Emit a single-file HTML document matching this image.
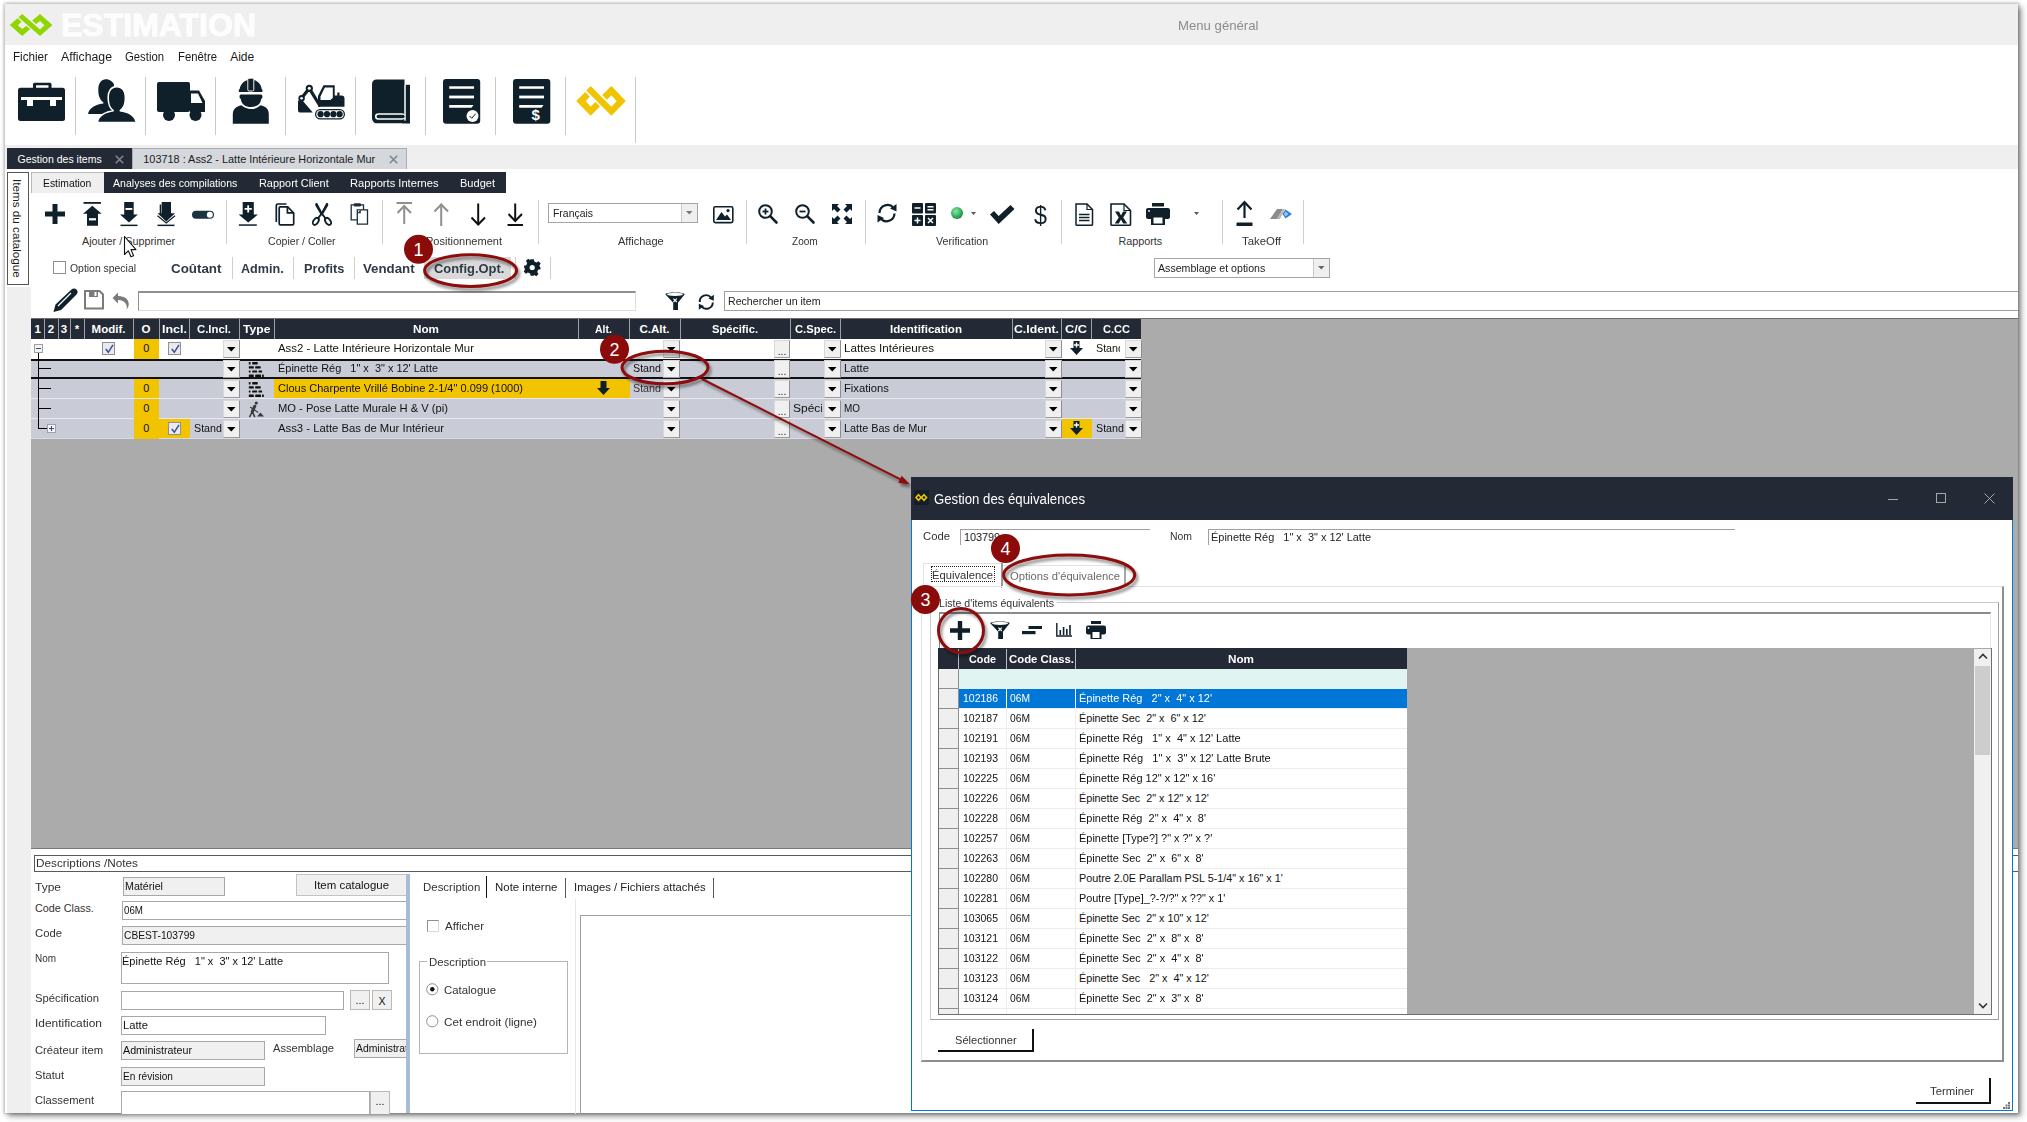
<!DOCTYPE html>
<html><head><meta charset="utf-8"><title>Estimation</title>
<style>
html,body{margin:0;padding:0;width:2027px;height:1122px;overflow:hidden;background:#fff;}
body{position:relative;font-family:"Liberation Sans", sans-serif;}
body div{position:absolute;box-sizing:border-box;}
body svg{position:absolute;overflow:visible;}
.t{white-space:pre;line-height:1;}

</style></head><body>
<div style="left:5px;top:4px;width:2013px;height:1109px;background:#fff;box-shadow:0 0 3px 1px rgba(0,0,0,0.25), 3px 3px 6px rgba(0,0,0,0.45);"></div>
<div style="left:5px;top:4px;width:2013px;height:41px;background:#efefef;"></div>
<svg style="left:0;top:0;" width="2027" height="1122" viewBox="0 0 2027 1122"><path d="M22.18,13.90 L40.02,29.40 L44.52,25.21 L40.02,20.88 L36.16,24.09 L32.14,20.60 L40.02,13.90 L52.40,25.07 L40.02,36.10 L18.48,17.25Z M17.52,18.37 L9.80,25.07 L22.18,36.10 L30.22,29.12 L26.36,25.91 L22.18,29.12 L17.84,25.21 L21.54,21.86Z" fill="#8fd600"/></svg>
<div class="t" style="left:60.60px;top:9.60px;font-size:30.5px;color:#fdfdfd;font-weight:bold;transform:scaleX(1.0494);transform-origin:0 0;-webkit-text-stroke:0.9px #fdfdfd;">ESTIMATION</div>
<div class="t" style="left:1178.25px;top:18.80px;font-size:13px;color:#8c8c8c;transform:scaleX(1.0126);transform-origin:0 0;">Menu général</div>
<div class="t" style="left:13.00px;top:51.00px;font-size:12px;color:#1b1b1b;transform:scaleX(0.9718);transform-origin:0 0;">Fichier</div>
<div class="t" style="left:61.20px;top:51.00px;font-size:12px;color:#1b1b1b;transform:scaleX(1.0235);transform-origin:0 0;">Affichage</div>
<div class="t" style="left:125.40px;top:51.00px;font-size:12px;color:#1b1b1b;transform:scaleX(0.9430);transform-origin:0 0;">Gestion</div>
<div class="t" style="left:178.00px;top:51.00px;font-size:12px;color:#1b1b1b;transform:scaleX(0.9430);transform-origin:0 0;">Fenêtre</div>
<div class="t" style="left:230.20px;top:51.00px;font-size:12px;color:#1b1b1b;">Aide</div>
<div style="left:75px;top:77px;width:1px;height:58px;background:#c9c9c9;"></div>
<div style="left:145px;top:77px;width:1px;height:58px;background:#c9c9c9;"></div>
<div style="left:215px;top:77px;width:1px;height:58px;background:#c9c9c9;"></div>
<div style="left:285px;top:77px;width:1px;height:58px;background:#c9c9c9;"></div>
<div style="left:355px;top:77px;width:1px;height:58px;background:#c9c9c9;"></div>
<div style="left:425px;top:77px;width:1px;height:58px;background:#c9c9c9;"></div>
<div style="left:495px;top:77px;width:1px;height:58px;background:#c9c9c9;"></div>
<div style="left:565px;top:77px;width:1px;height:58px;background:#c9c9c9;"></div>
<div style="left:635px;top:77px;width:1px;height:66px;background:#c9c9c9;"></div>
<svg style="left:18px;top:82px" width="48" height="40" viewBox="0 0 48 40"><g fill="#0f202b">
<rect x="0" y="5.8" width="47" height="33.2" rx="2.5"/>
<path d="M15,0.7 h17 a1.5,1.5 0 0 1 1.5,1.5 v4 h-3 v-3 h-12.5 v3 h-3 v-4 a1.5,1.5 0 0 1 1.5,-1.5z"/>
</g>
<path d="M3,16.5 h41" stroke="#fff" stroke-width="3.2"/>
<rect x="9" y="16" width="6" height="8" fill="#fff"/><rect x="32" y="16" width="6" height="8" fill="#fff"/></svg>
<svg style="left:88px;top:79px" width="48" height="44" viewBox="0 0 48 44"><path d="M15.6,23.7 C12,21 10.3,17 10.3,11 C10.3,4 13.5,0.3 17.9,0.3 C22,0.3 25,3 26,5.5 L26,35 H0 C1,29.5 7,25.5 15.3,24.6 Z" fill="#0f202b"/>
<path d="M25.9,31 C22,28.5 21,24 21,18.5 C21,12 24,8.4 28.8,8.4 C33.6,8.4 36.6,12 36.6,18.5 C36.6,24 35.5,28.5 31.5,31.2 L31.8,32.6 C40,33.5 46,37 47.3,42.7 H10.3 C11.5,37 18,33.5 25.6,32.6 Z" fill="#fff" stroke="#fff" stroke-width="3.2"/>
<path d="M25.9,31 C22,28.5 21,24 21,18.5 C21,12 24,8.4 28.8,8.4 C33.6,8.4 36.6,12 36.6,18.5 C36.6,24 35.5,28.5 31.5,31.2 L31.8,32.6 C40,33.5 46,37 47.3,42.7 H10.3 C11.5,37 18,33.5 25.6,32.6 Z" fill="#0f202b"/></svg>
<svg style="left:157px;top:82px" width="49" height="40" viewBox="0 0 49 40"><g fill="#0f202b">
<rect x="0" y="0" width="33" height="30" rx="2"/>
<path d="M33,8.5 H42 L48,19 V30 H33 Z"/>
<circle cx="12" cy="33" r="6"/><circle cx="38.5" cy="33" r="6"/>
</g>
<path d="M34,11.5 H41 L45.5,21 H34 Z" fill="#fff"/></svg>
<svg style="left:232px;top:77px" width="38" height="48" viewBox="0 0 38 48"><g fill="#0f202b">
<path d="M7.5,14.5 C7.5,8 11.5,4 16,3 V13.5 H21.5 V3 C26,4 30,8 30,14.5 Z"/>
<rect x="6.8" y="12.3" width="23.6" height="2.8" rx="0.6"/>
<path d="M9,17.5 H29 C30.3,17.5 30.8,19.5 30.2,21 L29.2,22 C28.5,27.5 24.5,30 19,30 C13.5,30 9.5,27.5 8.8,22 L7.8,21 C7.2,19.5 7.7,17.5 9,17.5Z"/>
<path d="M0.8,46.8 V37.5 C1,32 4,29.5 9.5,28.3 C12.5,31 15.5,32 19,32 C22.5,32 25.5,31 28.5,28.3 C34,29.5 36.8,32 36.8,37.5 V46.8 Z"/>
</g>
<rect x="15.8" y="1.2" width="6" height="12.8" rx="1.2" fill="#0f202b" stroke="#fff" stroke-width="0.9"/></svg>
<svg style="left:297px;top:84px" width="49" height="37" viewBox="0 0 49 37"><g fill="#0f202b">
<path d="M21,12 L26.5,1.3 H37.7 V11.5 H44.5 C46.5,11.5 47.5,12.5 47.5,14.5 V22.8 H21 Z"/>
<rect x="40.3" y="8.5" width="2.2" height="4"/>
<path d="M1,16.5 H5.5 L15.8,28.5 H3 C1.5,28.5 1,27.5 1,26 Z"/>
<rect x="18" y="25" width="30" height="10.5" rx="5.2"/>
</g>
<g fill="none" stroke="#0f202b" stroke-width="3.2" stroke-linecap="round" stroke-linejoin="round">
<path d="M22.5,21 L12.3,4.3 L4.5,14.3"/>
</g>
<circle cx="12.3" cy="4.3" r="3.6" fill="#0f202b"/><circle cx="4.6" cy="14.3" r="3.2" fill="#0f202b"/>
<circle cx="12.3" cy="4.3" r="1.5" fill="#fff"/><circle cx="4.6" cy="14.3" r="1.3" fill="#fff"/>
<path d="M23.5,12.6 L27.8,3.5 H35.8 V13.8 L33.5,16 H23.5 Z" fill="#fff"/>
<rect x="19.3" y="26.3" width="27.4" height="7.9" rx="3.9" fill="#fff"/>
<g fill="#0f202b"><circle cx="23.6" cy="30.2" r="3.1"/><circle cx="30" cy="30.2" r="3.1"/><circle cx="36.4" cy="30.2" r="3.1"/><circle cx="42.6" cy="30.2" r="3.1"/></g></svg>
<svg style="left:372px;top:79px" width="39" height="45" viewBox="0 0 39 45"><g fill="#0f202b">
<path d="M4.5,0.4 H32.5 V44.3 H5 C2,44.3 0,42 0,39 V5 C0,2 2,0.4 4.5,0.4 Z"/>
<rect x="33.5" y="5.8" width="4.5" height="38.5"/>
<rect x="30" y="41.5" width="8" height="2.8"/>
</g>
<rect x="32.5" y="5.8" width="1" height="35.7" fill="#fff"/>
<rect x="3" y="34.2" width="30" height="6.6" rx="3.3" fill="#fff"/>
<rect x="4.6" y="35.8" width="28" height="3.4" rx="1.7" fill="#0f202b"/></svg>
<svg style="left:443px;top:79px" width="38" height="45" viewBox="0 0 38 45"><rect x="0" y="0" width="37.2" height="44.8" rx="3" fill="#0f202b"/>
<g fill="#fff"><rect x="6.2" y="7.3" width="24.8" height="2.5"/><rect x="6.2" y="16.6" width="24.8" height="2.8"/><path d="M6.2,26 H30.5 L28.5,28.7 H6.2Z"/>
<circle cx="29.5" cy="37" r="6"/></g>
<path d="M26.5,37 L28.8,39.3 L32.7,34.6" fill="none" stroke="#0f202b" stroke-width="1"/></svg>
<svg style="left:513px;top:79px" width="38" height="45" viewBox="0 0 38 45"><rect x="0" y="0" width="37.3" height="44.8" rx="3" fill="#0f202b"/>
<g fill="#fff"><rect x="6.2" y="7.3" width="24.8" height="2.5"/><rect x="6.2" y="16.6" width="24.8" height="2.8"/><path d="M6.2,26 H30.5 L28.5,28.7 H6.2Z"/></g></svg>
<div class="t" style="left:531.50px;top:106.50px;font-size:15px;color:#fff;font-weight:bold;">$</div>
<svg style="left:0;top:0;" width="2027" height="1122" viewBox="0 0 2027 1122"><path d="M590.61,86.00 L611.39,106.80 L616.63,101.18 L611.39,95.37 L606.90,99.68 L602.22,95.00 L611.39,86.00 L625.80,100.99 L611.39,115.80 L586.31,90.50Z M585.18,92.00 L576.20,100.99 L590.61,115.80 L599.97,106.43 L595.48,102.12 L590.61,106.43 L585.56,101.18 L589.86,96.68Z" fill="#f0c400"/></svg>
<div style="left:5px;top:145px;width:2013px;height:24px;background:#efefef;"></div>
<div style="left:7px;top:148px;width:125px;height:21px;background:#232a35;"></div>
<div class="t" style="left:17.60px;top:153.80px;font-size:10.5px;color:#fff;">Gestion des items</div>
<svg style="left:115px;top:155px" width="9" height="9" viewBox="0 0 9 9"><path d="M0.8,0.8 L8.2,8.2 M8.2,0.8 L0.8,8.2" stroke="#80868e" stroke-width="1.6"/></svg>
<div style="left:132px;top:148px;width:275px;height:21px;background:#d4d7db;border:1px solid #a9adb3;border-bottom:none;"></div>
<div class="t" style="left:143.30px;top:153.80px;font-size:10.9px;color:#1b1b1b;">103718 : Ass2 - Latte Intérieure Horizontale Mur</div>
<svg style="left:389px;top:155px" width="9" height="9" viewBox="0 0 9 9"><path d="M0.8,0.8 L8.2,8.2 M8.2,0.8 L0.8,8.2" stroke="#80868e" stroke-width="1.6"/></svg>
<div style="left:7px;top:172px;width:22px;height:113px;background:#fff;border:1px solid #555;"></div>
<div class="t" style="left:23px;top:179px;font-size:11.7px;color:#1b1b1b;transform:rotate(90deg);transform-origin:0 0;line-height:1;">Items du catalogue</div>
<div style="left:7px;top:287px;width:24px;height:826px;background:#efefef;"></div>
<div style="left:31px;top:172px;width:73px;height:21px;background:#efefef;border-top:1px solid #b9b9b9;border-left:1px solid #b9b9b9;"></div>
<div class="t" style="left:42.80px;top:178.00px;font-size:10.5px;color:#111;transform:scaleX(0.9871);transform-origin:0 0;">Estimation</div>
<div style="left:104px;top:172px;width:402px;height:21px;background:#232a35;"></div>
<div class="t" style="left:113.30px;top:178.00px;font-size:10.8px;color:#fff;transform:scaleX(0.9777);transform-origin:0 0;">Analyses des compilations</div>
<div class="t" style="left:259.20px;top:178.00px;font-size:10.8px;color:#fff;transform:scaleX(1.0099);transform-origin:0 0;">Rapport Client</div>
<div class="t" style="left:350.00px;top:178.00px;font-size:10.8px;color:#fff;transform:scaleX(1.0323);transform-origin:0 0;">Rapports Internes</div>
<div class="t" style="left:460.00px;top:178.00px;font-size:10.8px;color:#fff;transform:scaleX(1.0224);transform-origin:0 0;">Budget</div>
<div style="left:226px;top:200px;width:1px;height:44px;background:#cfcfcf;"></div>
<div style="left:382px;top:200px;width:1px;height:44px;background:#cfcfcf;"></div>
<div style="left:538px;top:200px;width:1px;height:44px;background:#cfcfcf;"></div>
<div style="left:746px;top:200px;width:1px;height:44px;background:#cfcfcf;"></div>
<div style="left:865px;top:200px;width:1px;height:44px;background:#cfcfcf;"></div>
<div style="left:1061px;top:200px;width:1px;height:44px;background:#cfcfcf;"></div>
<div style="left:1222px;top:200px;width:1px;height:44px;background:#cfcfcf;"></div>
<div style="left:1303px;top:200px;width:1px;height:44px;background:#cfcfcf;"></div>
<div class="t" style="left:82.00px;top:236.00px;font-size:10.8px;color:#333;">Ajouter / Supprimer</div>
<div class="t" style="left:268.40px;top:236.00px;font-size:10.8px;color:#333;transform:scaleX(0.9795);transform-origin:0 0;">Copier / Coller</div>
<div class="t" style="left:425.50px;top:236.00px;font-size:10.8px;color:#333;transform:scaleX(1.0210);transform-origin:0 0;">Positionnement</div>
<div class="t" style="left:617.70px;top:236.00px;font-size:10.8px;color:#333;transform:scaleX(1.0194);transform-origin:0 0;">Affichage</div>
<div class="t" style="left:791.70px;top:236.00px;font-size:10.8px;color:#333;transform:scaleX(0.9308);transform-origin:0 0;">Zoom</div>
<div class="t" style="left:935.80px;top:236.00px;font-size:10.8px;color:#333;transform:scaleX(0.9881);transform-origin:0 0;">Verification</div>
<div class="t" style="left:1118.40px;top:236.00px;font-size:10.8px;color:#333;">Rapports</div>
<div class="t" style="left:1241.70px;top:236.00px;font-size:10.8px;color:#333;transform:scaleX(1.0536);transform-origin:0 0;">TakeOff</div>
<svg style="left:45px;top:204px" width="20" height="20" viewBox="0 0 20 20"><path d="M7.5,0 h5 v7.5 h7.5 v5 h-7.5 v7.5 h-5 v-7.5 h-7.5 v-5 h7.5z" fill="#0f202b"/></svg>
<svg style="left:83px;top:201px" width="19" height="26" viewBox="0 0 19 26"><rect x="0.5" y="1" width="17.5" height="1.8" fill="#0f202b"/>
<path d="M9.3,4.8 L18.7,12.8 H15 V24.8 H4 V12.8 H0 Z" fill="#0f202b"/>
<rect x="6" y="17.2" width="7" height="2.2" fill="#fff"/></svg>
<svg style="left:120px;top:202px" width="19" height="25" viewBox="0 0 19 25"><path d="M4.2,0 H13.7 V12.6 H17.8 L9,20.5 L0,12.6 H4.2 Z" fill="#0f202b"/>
<rect x="5.5" y="6" width="6.8" height="1.9" fill="#fff"/>
<rect x="0.5" y="22.6" width="17" height="1.5" fill="#0f202b"/></svg>
<svg style="left:157px;top:202px" width="19" height="25" viewBox="0 0 19 25"><rect x="2.7" y="2.5" width="1.6" height="10" fill="#0f202b"/>
<path d="M4.7,0 H14 V11.3 H18 L9.3,19.5 L0.5,11.3 H4.7 Z" fill="#0f202b"/>
<path d="M0.5,13.8 L9.3,21 L18,13.8" fill="none" stroke="#0f202b" stroke-width="1.2"/>
<rect x="0.5" y="22.6" width="17" height="1.5" fill="#0f202b"/></svg>
<svg style="left:192px;top:210px" width="23" height="10" viewBox="0 0 23 10"><rect x="0" y="0.8" width="22" height="8" rx="4" fill="#1c3341"/>
<circle cx="17.8" cy="4.8" r="3" fill="#fff"/></svg>
<svg style="left:238px;top:202px" width="20" height="25" viewBox="0 0 20 25"><path d="M4.7,0 H15.8 V12.6 H19.9 L10.2,20.6 L0.6,12.6 H4.7 Z" fill="#0f202b"/>
<path d="M9.3,3.2 h1.8 v2.7 h2.7 v1.8 h-2.7 v2.7 h-1.8 v-2.7 h-2.7 v-1.8 h2.7z" fill="#fff"/>
<rect x="0.9" y="22.3" width="17.9" height="1.5" fill="#0f202b"/></svg>
<svg style="left:274px;top:202px" width="22" height="25" viewBox="0 0 22 25"><g fill="none" stroke="#0f202b" stroke-width="1.7" stroke-linejoin="round">
<path d="M2.3,20 V3.5 C2.3,2.5 2.8,2 3.8,2 H12.5"/>
<path d="M5.2,6 C5.2,5.2 5.6,4.8 6.3,4.8 H13.7 L19.7,11 V21.8 C19.7,22.5 19.3,22.9 18.6,22.9 H6.3 C5.6,22.9 5.2,22.5 5.2,21.8 Z"/>
<path d="M13.4,4.8 V10.9 H19.6"/></g></svg>
<svg style="left:312px;top:202px" width="20" height="25" viewBox="0 0 20 25"><g fill="#0f202b">
<path d="M4,1 C5,0.8 5.8,1.5 6,2.5 L10.8,11.5 L9.2,13.5 L3.3,3.5 C3,2.5 3.3,1.3 4,1 Z"/>
<path d="M15.5,1 C14.5,0.8 13.7,1.5 13.5,2.5 L8.7,11.5 L10.3,13.5 L16.2,3.5 C16.5,2.5 16.2,1.3 15.5,1 Z"/>
<path d="M9.7,11.5 L5.5,17 M9.7,11.5 L14,17" stroke="#0f202b" stroke-width="2"/>
</g>
<g fill="none" stroke="#0f202b" stroke-width="1.9">
<ellipse cx="3.8" cy="19.3" rx="2.4" ry="3.9" transform="rotate(35 3.8 19.3)"/>
<ellipse cx="16" cy="19.3" rx="2.4" ry="3.9" transform="rotate(-35 16 19.3)"/>
</g></svg>
<svg style="left:350px;top:202px" width="19" height="24" viewBox="0 0 19 24"><g fill="none" stroke="#1b2d3a" stroke-width="1.3">
<path d="M10.5,2.8 H13.5 V8"/><path d="M4,2.8 H1.2 V17.8 H6.8"/>
<path d="M7.3,7.8 H17.5 V22.2 H7.3 V11.3 Z"/>
</g>
<rect x="3.7" y="1.2" width="7.3" height="3.2" rx="1.2" fill="#1b2d3a"/>
<path d="M7.3,11.3 L10.8,7.8 V11.3 Z" fill="#1b2d3a"/></svg>
<svg style="left:396px;top:202px" width="17" height="24" viewBox="0 0 17 24"><g fill="none" stroke="#8f8f8f" stroke-width="2">
<path d="M0.5,1 H16"/><path d="M8.2,4 V22"/><path d="M1.5,11 L8.2,4 L15,11"/></g></svg>
<svg style="left:433px;top:203px" width="17" height="24" viewBox="0 0 17 24"><g fill="none" stroke="#8f8f8f" stroke-width="2">
<path d="M8.2,1.5 V23"/><path d="M1.5,8.5 L8.2,1.5 L15,8.5"/></g></svg>
<svg style="left:470px;top:203px" width="17" height="24" viewBox="0 0 17 24"><g fill="none" stroke="#111" stroke-width="2">
<path d="M8.2,0.5 V21.5"/><path d="M1.5,14.5 L8.2,21.5 L15,14.5"/></g></svg>
<svg style="left:507px;top:203px" width="17" height="24" viewBox="0 0 17 24"><g fill="none" stroke="#111" stroke-width="2">
<path d="M8.2,0.5 V18"/><path d="M1.5,11 L8.2,18 L15,11"/><path d="M0.5,22 H16"/></g></svg>
<div style="left:548px;top:203px;width:150px;height:20px;background:#fff;border:1px solid #a5a5a5;"></div>
<div style="left:681px;top:204px;width:16px;height:18px;background:#efefef;border-left:1px solid #c8c8c8;"></div>
<svg style="left:686px;top:211px" width="7" height="4" viewBox="0 0 7 4"><path d="M0,0 H6.5 L3.25,3.5Z" fill="#777"/></svg>
<div class="t" style="left:552.50px;top:208.00px;font-size:10.8px;color:#222;transform:scaleX(0.9660);transform-origin:0 0;">Français</div>
<svg style="left:713px;top:206px" width="21" height="18" viewBox="0 0 21 18"><rect x="0.8" y="0.8" width="19" height="15.8" rx="1.5" fill="none" stroke="#0f202b" stroke-width="1.6"/>
<path d="M3,14 L8.5,6 L12,10.5 L14,8.5 L18,14 Z" fill="#0f202b"/><circle cx="15" cy="4.6" r="1.6" fill="#0f202b"/></svg>
<svg style="left:758px;top:204px" width="21" height="21" viewBox="0 0 21 21"><circle cx="7.5" cy="7.5" r="6.3" fill="none" stroke="#0f202b" stroke-width="2"/>
<path d="M4.5,7.5 H10.5" stroke="#0f202b" stroke-width="1.8"/><path d="M7.5,4.5 V10.5" stroke="#0f202b" stroke-width="1.8"/>
<path d="M12.2,12.2 L18.5,18.5" stroke="#0f202b" stroke-width="2.6" stroke-linecap="round"/></svg>
<svg style="left:795px;top:204px" width="21" height="21" viewBox="0 0 21 21"><circle cx="7.5" cy="7.5" r="6.3" fill="none" stroke="#0f202b" stroke-width="2"/>
<path d="M4.5,7.5 H10.5" stroke="#0f202b" stroke-width="1.8"/>
<path d="M12.2,12.2 L18.5,18.5" stroke="#0f202b" stroke-width="2.6" stroke-linecap="round"/></svg>
<svg style="left:832px;top:204px" width="21" height="21" viewBox="0 0 21 21"><g fill="#0f202b">
<path d="M0,0 H7 L5,2 L8.5,5.5 L5.5,8.5 L2,5 L0,7Z"/>
<path d="M20,0 H13 L15,2 L11.5,5.5 L14.5,8.5 L18,5 L20,7Z"/>
<path d="M0,20 H7 L5,18 L8.5,14.5 L5.5,11.5 L2,15 L0,13Z"/>
<path d="M20,20 H13 L15,18 L11.5,14.5 L14.5,11.5 L18,15 L20,13Z"/>
</g></svg>
<svg style="left:877px;top:203px" width="21" height="21" viewBox="0 0 21 21"><g fill="none" stroke="#0f202b" stroke-width="2.2">
<path d="M2.5,10 A8,8 0 0 1 16.5,4.8"/><path d="M17.5,10.5 A8,8 0 0 1 3.5,15.5"/></g>
<path d="M13,5.5 L19.5,1 V8.5Z" fill="#0f202b"/><path d="M7,15 L0.5,19.5 V12Z" fill="#0f202b"/></svg>
<svg style="left:912px;top:203px" width="24" height="23" viewBox="0 0 24 23"><g fill="#0f202b"><rect x="0" y="0" width="11" height="10.5" rx="1"/><rect x="13" y="0" width="11" height="10.5" rx="1"/>
<rect x="0" y="12" width="11" height="11" rx="1"/><rect x="13" y="12" width="11" height="11" rx="1"/></g>
<g stroke="#fff" stroke-width="1.5"><path d="M2.5,5 H8.5"/><path d="M15.5,3.8 H21.5 M15.5,6.8 H21.5"/>
<path d="M2.5,17.5 H8.5 M5.5,14.5 V20.5"/><path d="M16,15 L21,20 M21,15 L16,20"/></g></svg>
<svg style="left:951px;top:207px" width="13" height="13" viewBox="0 0 13 13"><defs><radialGradient id="gb" cx="0.4" cy="0.35" r="0.7"><stop offset="0" stop-color="#8ee6a4"/><stop offset="0.6" stop-color="#35b462"/><stop offset="1" stop-color="#1d7d3e"/></radialGradient></defs>
<circle cx="6" cy="6" r="6" fill="url(#gb)"/></svg>
<svg style="left:971px;top:212px" width="6" height="4" viewBox="0 0 6 4"><path d="M0,0 H5 L2.5,3Z" fill="#555"/></svg>
<svg style="left:990px;top:205px" width="25" height="20" viewBox="0 0 25 20"><path d="M0,9.5 L4,6 L8.7,11 L20.5,0 L24.5,4 L8.7,19 Z" fill="#0f202b"/></svg>
<div class="t" style="left:1034.00px;top:201.50px;font-size:26px;color:#0f202b;transform:scaleX(0.8985);transform-origin:0 0;">$</div>
<svg style="left:1075px;top:203px" width="19" height="23" viewBox="0 0 19 23"><path d="M1,1 H12 L17.5,6.5 V21.5 C17.5,22 17,22.3 16.5,22.3 H2 C1.5,22.3 1,22 1,21.5 Z" fill="none" stroke="#0f202b" stroke-width="1.5"/>
<path d="M12,1 V6.5 H17.5" fill="none" stroke="#0f202b" stroke-width="1.2"/>
<g stroke="#0f202b" stroke-width="1.3"><path d="M4,11.5 H14.5 M4,14.5 H14.5 M4,17.5 H14.5"/></g></svg>
<svg style="left:1110px;top:203px" width="22" height="23" viewBox="0 0 22 23"><path d="M1,1 H14 L20.5,7.5 V21.5 C20.5,22 20,22.3 19.5,22.3 H2 C1.5,22.3 1,22 1,21.5 Z" fill="none" stroke="#0f202b" stroke-width="1.6"/>
<path d="M14,1 V7.5 H20.5" fill="none" stroke="#0f202b" stroke-width="1.2"/>
<path d="M5,8.5 H9 L11,12.5 L13,8.5 H17 L13.2,14.5 L17.3,20.5 H13.2 L11,16.5 L8.8,20.5 H4.7 L8.8,14.5 Z" fill="#0f202b"/></svg>
<svg style="left:1146px;top:203px" width="25" height="22" viewBox="0 0 25 22"><g fill="#0f202b"><rect x="6" y="0" width="12" height="3.5"/><rect x="0" y="5" width="24" height="11" rx="2"/>
<rect x="5" y="12" width="14" height="10"/></g>
<rect x="7.5" y="14.5" width="9" height="6" fill="#fff"/><circle cx="3" cy="8" r="0.9" fill="#fff"/></svg>
<svg style="left:1194px;top:212px" width="6" height="4" viewBox="0 0 6 4"><path d="M0,0 H5 L2.5,3Z" fill="#555"/></svg>
<svg style="left:1236px;top:201px" width="18" height="26" viewBox="0 0 18 26"><path d="M8.5,1 V17" stroke="#0f202b" stroke-width="2.2"/><path d="M1.5,8.5 L8.5,1.2 L15.5,8.5" fill="none" stroke="#0f202b" stroke-width="2.2"/>
<rect x="0.5" y="21.5" width="16" height="3.5" rx="0.5" fill="#0f202b"/></svg>
<svg style="left:1270px;top:208px" width="23" height="12" viewBox="0 0 23 12"><path d="M0,11 L7,1 H13 L7,11 Z" fill="#8c8c8c"/><path d="M7,11 L13,1 H15 L10,11Z" fill="#b8b8b8"/>
<path d="M15.5,1.5 L22,6 L15.5,10.5 L12.5,6Z" fill="#2f7fd6"/><path d="M15.5,3.5 L18.5,6 L15.5,8.5 L14,6Z" fill="#9bc6f2"/></svg>
<div style="left:53px;top:261px;width:13px;height:13px;background:#fff;border:1px solid #8f8f8f;"></div>
<div class="t" style="left:70.00px;top:262.50px;font-size:10.5px;color:#333;transform:scaleX(0.9918);transform-origin:0 0;">Option special</div>
<div style="left:425px;top:257px;width:86px;height:22px;background:#d9d9d9;"></div>
<div style="left:232px;top:257px;width:1px;height:22px;background:#cfcfcf;"></div>
<div style="left:293px;top:257px;width:1px;height:22px;background:#cfcfcf;"></div>
<div style="left:354px;top:257px;width:1px;height:22px;background:#cfcfcf;"></div>
<div style="left:424px;top:257px;width:1px;height:22px;background:#cfcfcf;"></div>
<div style="left:515px;top:257px;width:1px;height:22px;background:#cfcfcf;"></div>
<div style="left:550px;top:257px;width:1px;height:22px;background:#cfcfcf;"></div>
<div class="t" style="left:171.40px;top:263.00px;font-size:12px;color:#2e3a46;font-weight:bold;transform:scaleX(1.1119);transform-origin:0 0;">Coûtant</div>
<div class="t" style="left:240.80px;top:263.00px;font-size:12px;color:#2e3a46;font-weight:bold;transform:scaleX(1.0499);transform-origin:0 0;">Admin.</div>
<div class="t" style="left:303.50px;top:263.00px;font-size:12px;color:#2e3a46;font-weight:bold;transform:scaleX(1.0601);transform-origin:0 0;">Profits</div>
<div class="t" style="left:363.00px;top:263.00px;font-size:12px;color:#2e3a46;font-weight:bold;transform:scaleX(1.1052);transform-origin:0 0;">Vendant</div>
<div class="t" style="left:434.30px;top:263.00px;font-size:12px;color:#2e3a46;font-weight:bold;transform:scaleX(1.0761);transform-origin:0 0;">Config.Opt.</div>
<svg style="left:524px;top:259px" width="17" height="17" viewBox="0 0 17 17"><g transform="translate(8.2,8.5)" fill="#0f202b">
<path d="M-1.6,-8.2 H1.6 L2.1,-5.9 L4.3,-5 L6.3,-6.3 L8.5,-4.1 L7.2,-2.1 L8,0 L8.3,-0.2 V1.8 L5.9,2.3 L5,4.5 L6.3,6.5 L4.1,8.7 L2.1,7.4 L1.6,7.7 V8.3 H-1.6 L-2.1,5.9 L-4.3,5 L-6.3,6.3 L-8.5,4.1 L-7.2,2.1 L-8,0 L-8.3,-1.8 L-5.9,-2.3 L-5,-4.5 L-6.3,-6.5 L-4.1,-8.7 L-2.1,-7.4 Z"/>
</g><circle cx="8.2" cy="8.5" r="4.6" fill="#0f202b"/><circle cx="8.2" cy="8.5" r="2.6" fill="#fff"/></svg>
<div style="left:1154px;top:258px;width:176px;height:20px;background:#fff;border:1px solid #a5a5a5;"></div>
<div style="left:1313px;top:259px;width:16px;height:18px;background:#efefef;border-left:1px solid #c8c8c8;"></div>
<svg style="left:1318px;top:266px" width="7" height="4" viewBox="0 0 7 4"><path d="M0,0 H6.5 L3.25,3.5Z" fill="#666"/></svg>
<div class="t" style="left:1157.70px;top:262.50px;font-size:10.8px;color:#222;transform:scaleX(0.9823);transform-origin:0 0;">Assemblage et options</div>
<svg style="left:53px;top:288px" width="25" height="25" viewBox="0 0 25 25"><path d="M18.5,1.5 C20,0 22,0 23.5,1.5 C25,3 25,5 23.5,6.5 L8,22 L0.5,24 L2.5,16.5 Z" fill="#0f202b"/>
<path d="M5,18 L18,5" stroke="#fff" stroke-width="1.3"/></svg>
<svg style="left:84px;top:290px" width="20" height="20" viewBox="0 0 20 20"><path d="M1,1 H15.5 L19,4.5 V18.5 H1 Z" fill="none" stroke="#7b7b7b" stroke-width="2"/>
<rect x="5" y="1" width="9" height="6" fill="#7b7b7b"/><rect x="10.5" y="2" width="2" height="4" fill="#fff"/></svg>
<svg style="left:112px;top:292px" width="17" height="18" viewBox="0 0 17 18"><path d="M6,0.5 L0.5,6 L6,11.5 V8 C10,8 13,9.5 14.5,13 C15,14.5 15,16 14.5,17.5 C17,15 17.5,11 15.5,8 C13.5,5 10,4 6,4 Z" fill="#7b7b7b"/></svg>
<div style="left:138px;top:291px;width:498px;height:20px;background:#fff;border-top:2px solid #8f8f8f;border-left:1px solid #8f8f8f;border-right:1px solid #dedede;border-bottom:1px solid #dedede;"></div>
<svg style="left:665px;top:291px" width="20" height="20" viewBox="0 0 20 20"><path d="M0.3,3.3 C0.3,1 19.7,1 19.7,3.3 L13,11.8 V19 H8.2 V11.8 Z" fill="#0f202b"/>
<ellipse cx="10" cy="3.3" rx="8.3" ry="1.6" fill="#fff"/>
<path d="M8.4,7.6 L11.8,11 M11.8,7.6 L8.4,11" stroke="#fff" stroke-width="1.1"/></svg>
<svg style="left:698px;top:294px" width="17" height="17" viewBox="0 0 17 17"><g fill="none" stroke="#0f202b" stroke-width="1.9">
<path d="M1.8,8 A6.3,6.3 0 0 1 13,3.6"/><path d="M14.8,8.5 A6.3,6.3 0 0 1 3.8,12.6"/></g>
<path d="M10.5,4.5 L15.8,0.8 V6.8Z" fill="#0f202b"/><path d="M6,12 L0.8,15.8 V9.8Z" fill="#0f202b"/></svg>
<div style="left:724px;top:291px;width:1294px;height:20px;background:#fff;border:1px solid #a0a0a0;border-right:none;"></div>
<div class="t" style="left:727.60px;top:295.50px;font-size:10.8px;color:#222;transform:scaleX(0.9818);transform-origin:0 0;">Rechercher un item</div>
<div style="left:31px;top:318px;width:1987px;height:531px;background:#ababab;border-top:1px solid #6e6e6e;border-bottom:1px solid #7a7a7a;"></div>
<div style="left:31px;top:319px;width:1110px;height:20px;background:#232a35;"></div>
<div class="t" style="left:34.60px;top:323.50px;font-size:11.5px;color:#fff;font-weight:bold;">1</div>
<div style="left:44px;top:319px;width:1px;height:20px;background:#9aa0a8;"></div>
<div class="t" style="left:47.75px;top:323.50px;font-size:11.5px;color:#fff;font-weight:bold;">2</div>
<div style="left:58px;top:319px;width:1px;height:20px;background:#9aa0a8;"></div>
<div class="t" style="left:60.70px;top:323.50px;font-size:11.5px;color:#fff;font-weight:bold;">3</div>
<div style="left:70px;top:319px;width:1px;height:20px;background:#9aa0a8;"></div>
<div class="t" style="left:74.81px;top:323.50px;font-size:11.5px;color:#fff;font-weight:bold;">*</div>
<div style="left:84px;top:319px;width:1px;height:20px;background:#9aa0a8;"></div>
<div class="t" style="left:91.60px;top:323.50px;font-size:11.5px;color:#fff;font-weight:bold;">Modif.</div>
<div style="left:133px;top:319px;width:1px;height:20px;background:#9aa0a8;"></div>
<div class="t" style="left:141.52px;top:323.50px;font-size:11.5px;color:#fff;font-weight:bold;">O</div>
<div style="left:159px;top:319px;width:1px;height:20px;background:#9aa0a8;"></div>
<div class="t" style="left:161.50px;top:323.50px;font-size:11.5px;color:#fff;font-weight:bold;transform:scaleX(1.0862);transform-origin:0 0;">Incl.</div>
<div style="left:189px;top:319px;width:1px;height:20px;background:#9aa0a8;"></div>
<div class="t" style="left:197.40px;top:323.50px;font-size:11.5px;color:#fff;font-weight:bold;transform:scaleX(0.9851);transform-origin:0 0;">C.Incl.</div>
<div style="left:239px;top:319px;width:1px;height:20px;background:#9aa0a8;"></div>
<div class="t" style="left:243.10px;top:323.50px;font-size:11.5px;color:#fff;font-weight:bold;transform:scaleX(1.0577);transform-origin:0 0;">Type</div>
<div style="left:274px;top:319px;width:1px;height:20px;background:#9aa0a8;"></div>
<div class="t" style="left:412.90px;top:323.50px;font-size:11.5px;color:#fff;font-weight:bold;transform:scaleX(1.0171);transform-origin:0 0;">Nom</div>
<div style="left:578px;top:319px;width:1px;height:20px;background:#9aa0a8;"></div>
<div class="t" style="left:594.90px;top:323.50px;font-size:11.5px;color:#fff;font-weight:bold;transform:scaleX(0.9174);transform-origin:0 0;">Alt.</div>
<div style="left:629px;top:319px;width:1px;height:20px;background:#9aa0a8;"></div>
<div class="t" style="left:639.45px;top:323.50px;font-size:11.5px;color:#fff;font-weight:bold;">C.Alt.</div>
<div style="left:680px;top:319px;width:1px;height:20px;background:#9aa0a8;"></div>
<div class="t" style="left:711.85px;top:323.50px;font-size:11.5px;color:#fff;font-weight:bold;transform:scaleX(0.9723);transform-origin:0 0;">Spécific.</div>
<div style="left:790px;top:319px;width:1px;height:20px;background:#9aa0a8;"></div>
<div class="t" style="left:794.75px;top:323.50px;font-size:11.5px;color:#fff;font-weight:bold;transform:scaleX(0.9719);transform-origin:0 0;">C.Spec.</div>
<div style="left:840px;top:319px;width:1px;height:20px;background:#9aa0a8;"></div>
<div class="t" style="left:889.95px;top:323.50px;font-size:11.5px;color:#fff;font-weight:bold;transform:scaleX(1.0061);transform-origin:0 0;">Identification</div>
<div style="left:1012px;top:319px;width:1px;height:20px;background:#9aa0a8;"></div>
<div class="t" style="left:1013.75px;top:323.50px;font-size:11.5px;color:#fff;font-weight:bold;transform:scaleX(1.0671);transform-origin:0 0;">C.Ident.</div>
<div style="left:1061px;top:319px;width:1px;height:20px;background:#9aa0a8;"></div>
<div class="t" style="left:1065.00px;top:323.50px;font-size:11.5px;color:#fff;font-weight:bold;transform:scaleX(1.1104);transform-origin:0 0;">C/C</div>
<div style="left:1091px;top:319px;width:1px;height:20px;background:#9aa0a8;"></div>
<div class="t" style="left:1102.65px;top:323.50px;font-size:11.5px;color:#fff;font-weight:bold;transform:scaleX(0.9600);transform-origin:0 0;">C.CC</div>
<div style="left:31px;top:339px;width:1110px;height:20px;background:#fff;"></div>
<div style="left:31px;top:359px;width:1110px;height:20px;background:#c9cbd6;"></div>
<div style="left:31px;top:379px;width:1110px;height:20px;background:#c9cbd6;"></div>
<div style="left:31px;top:399px;width:1110px;height:20px;background:#c9cbd6;"></div>
<div style="left:31px;top:419px;width:1110px;height:20px;background:#c9cbd6;"></div>
<div style="left:31px;top:398px;width:1110px;height:1px;background:#e8e8ee;"></div>
<div style="left:31px;top:418px;width:1110px;height:1px;background:#e8e8ee;"></div>
<div style="left:31px;top:438px;width:1110px;height:1px;background:#dadbe2;"></div>
<div style="left:31px;top:359px;width:1110px;height:2px;background:#111;"></div>
<div style="left:31px;top:377px;width:1110px;height:2px;background:#111;"></div>
<div style="left:134px;top:339px;width:25px;height:20px;background:#f2c400;"></div>
<div style="left:134px;top:379px;width:25px;height:19px;background:#f2c400;"></div>
<div style="left:134px;top:399px;width:25px;height:20px;background:#f2c400;"></div>
<div style="left:134px;top:419px;width:25px;height:20px;background:#f2c400;"></div>
<div style="left:159px;top:419px;width:31px;height:19px;background:#f2c400;"></div>
<div style="left:274.3px;top:379px;width:355.6px;height:19px;background:#f2c400;"></div>
<div style="left:1062px;top:419px;width:30px;height:19px;background:#f2c400;"></div>
<div style="left:31px;top:377px;width:1110px;height:2px;background:#111;"></div>
<div style="left:223px;top:340px;width:17px;height:18px;background:#f0f0f0;border:1px solid #d8d8d8;border-right-color:#8e8e8e;border-bottom-color:#9a9a9a;"></div>
<svg style="left:227px;top:347px" width="9" height="5" viewBox="0 0 9 5"><path d="M0,0 H8.5 L4.25,4.5Z" fill="#000"/></svg>
<div style="left:663px;top:340px;width:17px;height:18px;background:#f0f0f0;border:1px solid #d8d8d8;border-right-color:#8e8e8e;border-bottom-color:#9a9a9a;"></div>
<svg style="left:667px;top:347px" width="9" height="5" viewBox="0 0 9 5"><path d="M0,0 H8.5 L4.25,4.5Z" fill="#000"/></svg>
<div style="left:774px;top:340px;width:16px;height:18px;background:#f0f0f0;border:1px solid #d8d8d8;border-right-color:#8e8e8e;border-bottom-color:#9a9a9a;"></div>
<div class="t" style="left:777.83px;top:346.50px;font-size:10px;color:#222;">...</div>
<div style="left:824px;top:340px;width:17px;height:18px;background:#f0f0f0;border:1px solid #d8d8d8;border-right-color:#8e8e8e;border-bottom-color:#9a9a9a;"></div>
<svg style="left:828px;top:347px" width="9" height="5" viewBox="0 0 9 5"><path d="M0,0 H8.5 L4.25,4.5Z" fill="#000"/></svg>
<div style="left:1045px;top:340px;width:17px;height:18px;background:#f0f0f0;border:1px solid #d8d8d8;border-right-color:#8e8e8e;border-bottom-color:#9a9a9a;"></div>
<svg style="left:1049px;top:347px" width="9" height="5" viewBox="0 0 9 5"><path d="M0,0 H8.5 L4.25,4.5Z" fill="#000"/></svg>
<div style="left:1125px;top:340px;width:17px;height:18px;background:#f0f0f0;border:1px solid #d8d8d8;border-right-color:#8e8e8e;border-bottom-color:#9a9a9a;"></div>
<svg style="left:1129px;top:347px" width="9" height="5" viewBox="0 0 9 5"><path d="M0,0 H8.5 L4.25,4.5Z" fill="#000"/></svg>
<div style="left:223px;top:360px;width:17px;height:18px;background:#f0f0f0;border:1px solid #d8d8d8;border-right-color:#8e8e8e;border-bottom-color:#9a9a9a;"></div>
<svg style="left:227px;top:367px" width="9" height="5" viewBox="0 0 9 5"><path d="M0,0 H8.5 L4.25,4.5Z" fill="#000"/></svg>
<div style="left:663px;top:360px;width:17px;height:18px;background:#f0f0f0;border:1px solid #d8d8d8;border-right-color:#8e8e8e;border-bottom-color:#9a9a9a;"></div>
<svg style="left:667px;top:367px" width="9" height="5" viewBox="0 0 9 5"><path d="M0,0 H8.5 L4.25,4.5Z" fill="#000"/></svg>
<div style="left:774px;top:360px;width:16px;height:18px;background:#f0f0f0;border:1px solid #d8d8d8;border-right-color:#8e8e8e;border-bottom-color:#9a9a9a;"></div>
<div class="t" style="left:777.83px;top:366.50px;font-size:10px;color:#222;">...</div>
<div style="left:824px;top:360px;width:17px;height:18px;background:#f0f0f0;border:1px solid #d8d8d8;border-right-color:#8e8e8e;border-bottom-color:#9a9a9a;"></div>
<svg style="left:828px;top:367px" width="9" height="5" viewBox="0 0 9 5"><path d="M0,0 H8.5 L4.25,4.5Z" fill="#000"/></svg>
<div style="left:1045px;top:360px;width:17px;height:18px;background:#f0f0f0;border:1px solid #d8d8d8;border-right-color:#8e8e8e;border-bottom-color:#9a9a9a;"></div>
<svg style="left:1049px;top:367px" width="9" height="5" viewBox="0 0 9 5"><path d="M0,0 H8.5 L4.25,4.5Z" fill="#000"/></svg>
<div style="left:1125px;top:360px;width:17px;height:18px;background:#f0f0f0;border:1px solid #d8d8d8;border-right-color:#8e8e8e;border-bottom-color:#9a9a9a;"></div>
<svg style="left:1129px;top:367px" width="9" height="5" viewBox="0 0 9 5"><path d="M0,0 H8.5 L4.25,4.5Z" fill="#000"/></svg>
<div style="left:223px;top:380px;width:17px;height:18px;background:#f0f0f0;border:1px solid #d8d8d8;border-right-color:#8e8e8e;border-bottom-color:#9a9a9a;"></div>
<svg style="left:227px;top:387px" width="9" height="5" viewBox="0 0 9 5"><path d="M0,0 H8.5 L4.25,4.5Z" fill="#000"/></svg>
<div style="left:663px;top:380px;width:17px;height:18px;background:#f0f0f0;border:1px solid #d8d8d8;border-right-color:#8e8e8e;border-bottom-color:#9a9a9a;"></div>
<svg style="left:667px;top:387px" width="9" height="5" viewBox="0 0 9 5"><path d="M0,0 H8.5 L4.25,4.5Z" fill="#000"/></svg>
<div style="left:774px;top:380px;width:16px;height:18px;background:#f0f0f0;border:1px solid #d8d8d8;border-right-color:#8e8e8e;border-bottom-color:#9a9a9a;"></div>
<div class="t" style="left:777.83px;top:386.50px;font-size:10px;color:#222;">...</div>
<div style="left:824px;top:380px;width:17px;height:18px;background:#f0f0f0;border:1px solid #d8d8d8;border-right-color:#8e8e8e;border-bottom-color:#9a9a9a;"></div>
<svg style="left:828px;top:387px" width="9" height="5" viewBox="0 0 9 5"><path d="M0,0 H8.5 L4.25,4.5Z" fill="#000"/></svg>
<div style="left:1045px;top:380px;width:17px;height:18px;background:#f0f0f0;border:1px solid #d8d8d8;border-right-color:#8e8e8e;border-bottom-color:#9a9a9a;"></div>
<svg style="left:1049px;top:387px" width="9" height="5" viewBox="0 0 9 5"><path d="M0,0 H8.5 L4.25,4.5Z" fill="#000"/></svg>
<div style="left:1125px;top:380px;width:17px;height:18px;background:#f0f0f0;border:1px solid #d8d8d8;border-right-color:#8e8e8e;border-bottom-color:#9a9a9a;"></div>
<svg style="left:1129px;top:387px" width="9" height="5" viewBox="0 0 9 5"><path d="M0,0 H8.5 L4.25,4.5Z" fill="#000"/></svg>
<div style="left:223px;top:400px;width:17px;height:18px;background:#f0f0f0;border:1px solid #d8d8d8;border-right-color:#8e8e8e;border-bottom-color:#9a9a9a;"></div>
<svg style="left:227px;top:407px" width="9" height="5" viewBox="0 0 9 5"><path d="M0,0 H8.5 L4.25,4.5Z" fill="#000"/></svg>
<div style="left:663px;top:400px;width:17px;height:18px;background:#f0f0f0;border:1px solid #d8d8d8;border-right-color:#8e8e8e;border-bottom-color:#9a9a9a;"></div>
<svg style="left:667px;top:407px" width="9" height="5" viewBox="0 0 9 5"><path d="M0,0 H8.5 L4.25,4.5Z" fill="#000"/></svg>
<div style="left:774px;top:400px;width:16px;height:18px;background:#f0f0f0;border:1px solid #d8d8d8;border-right-color:#8e8e8e;border-bottom-color:#9a9a9a;"></div>
<div class="t" style="left:777.83px;top:406.50px;font-size:10px;color:#222;">...</div>
<div style="left:824px;top:400px;width:17px;height:18px;background:#f0f0f0;border:1px solid #d8d8d8;border-right-color:#8e8e8e;border-bottom-color:#9a9a9a;"></div>
<svg style="left:828px;top:407px" width="9" height="5" viewBox="0 0 9 5"><path d="M0,0 H8.5 L4.25,4.5Z" fill="#000"/></svg>
<div style="left:1045px;top:400px;width:17px;height:18px;background:#f0f0f0;border:1px solid #d8d8d8;border-right-color:#8e8e8e;border-bottom-color:#9a9a9a;"></div>
<svg style="left:1049px;top:407px" width="9" height="5" viewBox="0 0 9 5"><path d="M0,0 H8.5 L4.25,4.5Z" fill="#000"/></svg>
<div style="left:1125px;top:400px;width:17px;height:18px;background:#f0f0f0;border:1px solid #d8d8d8;border-right-color:#8e8e8e;border-bottom-color:#9a9a9a;"></div>
<svg style="left:1129px;top:407px" width="9" height="5" viewBox="0 0 9 5"><path d="M0,0 H8.5 L4.25,4.5Z" fill="#000"/></svg>
<div style="left:223px;top:420px;width:17px;height:18px;background:#f0f0f0;border:1px solid #d8d8d8;border-right-color:#8e8e8e;border-bottom-color:#9a9a9a;"></div>
<svg style="left:227px;top:427px" width="9" height="5" viewBox="0 0 9 5"><path d="M0,0 H8.5 L4.25,4.5Z" fill="#000"/></svg>
<div style="left:663px;top:420px;width:17px;height:18px;background:#f0f0f0;border:1px solid #d8d8d8;border-right-color:#8e8e8e;border-bottom-color:#9a9a9a;"></div>
<svg style="left:667px;top:427px" width="9" height="5" viewBox="0 0 9 5"><path d="M0,0 H8.5 L4.25,4.5Z" fill="#000"/></svg>
<div style="left:774px;top:420px;width:16px;height:18px;background:#f0f0f0;border:1px solid #d8d8d8;border-right-color:#8e8e8e;border-bottom-color:#9a9a9a;"></div>
<div class="t" style="left:777.83px;top:426.50px;font-size:10px;color:#222;">...</div>
<div style="left:824px;top:420px;width:17px;height:18px;background:#f0f0f0;border:1px solid #d8d8d8;border-right-color:#8e8e8e;border-bottom-color:#9a9a9a;"></div>
<svg style="left:828px;top:427px" width="9" height="5" viewBox="0 0 9 5"><path d="M0,0 H8.5 L4.25,4.5Z" fill="#000"/></svg>
<div style="left:1045px;top:420px;width:17px;height:18px;background:#f0f0f0;border:1px solid #d8d8d8;border-right-color:#8e8e8e;border-bottom-color:#9a9a9a;"></div>
<svg style="left:1049px;top:427px" width="9" height="5" viewBox="0 0 9 5"><path d="M0,0 H8.5 L4.25,4.5Z" fill="#000"/></svg>
<div style="left:1125px;top:420px;width:17px;height:18px;background:#f0f0f0;border:1px solid #d8d8d8;border-right-color:#8e8e8e;border-bottom-color:#9a9a9a;"></div>
<svg style="left:1129px;top:427px" width="9" height="5" viewBox="0 0 9 5"><path d="M0,0 H8.5 L4.25,4.5Z" fill="#000"/></svg>
<div style="left:102px;top:342px;width:13px;height:13px;background:#e9e9ef;border:1px solid #8f8f96;"></div>
<svg style="left:104.5px;top:344px" width="9" height="10" viewBox="0 0 9 10"><path d="M0.8,5 L3.3,8.3 L8,0.8" fill="none" stroke="#3a4f8f" stroke-width="1.5"/></svg>
<div style="left:168px;top:342px;width:13px;height:13px;background:#e9e9ef;border:1px solid #8f8f96;"></div>
<svg style="left:170.5px;top:344px" width="9" height="10" viewBox="0 0 9 10"><path d="M0.8,5 L3.3,8.3 L8,0.8" fill="none" stroke="#3a4f8f" stroke-width="1.5"/></svg>
<div style="left:168px;top:422px;width:13px;height:13px;background:#e9e9ef;border:1px solid #8f8f96;"></div>
<svg style="left:170.5px;top:424px" width="9" height="10" viewBox="0 0 9 10"><path d="M0.8,5 L3.3,8.3 L8,0.8" fill="none" stroke="#3a4f8f" stroke-width="1.5"/></svg>
<div style="left:38px;top:353px;width:1px;height:76px;background:#000;"></div>
<div style="left:38px;top:368px;width:13px;height:1px;background:#000;"></div>
<div style="left:38px;top:388px;width:13px;height:1px;background:#000;"></div>
<div style="left:38px;top:408px;width:13px;height:1px;background:#000;"></div>
<div style="left:38px;top:428px;width:10px;height:1px;background:#000;"></div>
<div style="left:34px;top:344px;width:9px;height:9px;background:#f4f4f4;border:1px solid #a0a0a0;"></div>
<div style="left:36px;top:348px;width:5px;height:1px;background:#2b4a8b;"></div>
<div style="left:47px;top:424px;width:9px;height:9px;background:#f4f4f4;border:1px solid #a0a0a0;"></div>
<div style="left:49px;top:428px;width:5px;height:1px;background:#2b4a8b;"></div>
<div style="left:51px;top:426px;width:1px;height:5px;background:#2b4a8b;"></div>
<div class="t" style="left:143.14px;top:343.00px;font-size:11px;color:#111;">0</div>
<div class="t" style="left:143.14px;top:383.00px;font-size:11px;color:#111;">0</div>
<div class="t" style="left:143.14px;top:403.00px;font-size:11px;color:#111;">0</div>
<div class="t" style="left:143.14px;top:423.00px;font-size:11px;color:#111;">0</div>
<svg style="left:248px;top:361px" width="17" height="17" viewBox="0 0 17 17"><g fill="#111"><rect x="0.8" y="1.1" width="1.7" height="2.3" rx="0.5"/><rect x="4.2" y="1.1" width="5.5" height="2.3" rx="0.5"/><rect x="0.8" y="5.3" width="5.0" height="2.2" rx="0.5"/><rect x="7.2" y="5.3" width="5.5" height="2.2" rx="0.5"/><rect x="0.8" y="9.4" width="1.7" height="2.2" rx="0.5"/><rect x="4.2" y="9.4" width="4.9" height="2.2" rx="0.5"/><rect x="10.5" y="9.4" width="3.6" height="2.2" rx="0.5"/><rect x="0.8" y="13.6" width="5.0" height="2.5" rx="0.5"/><rect x="7.2" y="13.6" width="5.8" height="2.5" rx="0.5"/><rect x="14" y="13.6" width="1.8" height="2.5" rx="0.5"/></g></svg>
<svg style="left:248px;top:380.7px" width="17" height="17" viewBox="0 0 17 17"><g fill="#111"><rect x="0.8" y="1.1" width="1.7" height="2.3" rx="0.5"/><rect x="4.2" y="1.1" width="5.5" height="2.3" rx="0.5"/><rect x="0.8" y="5.3" width="5.0" height="2.2" rx="0.5"/><rect x="7.2" y="5.3" width="5.5" height="2.2" rx="0.5"/><rect x="0.8" y="9.4" width="1.7" height="2.2" rx="0.5"/><rect x="4.2" y="9.4" width="4.9" height="2.2" rx="0.5"/><rect x="10.5" y="9.4" width="3.6" height="2.2" rx="0.5"/><rect x="0.8" y="13.6" width="5.0" height="2.5" rx="0.5"/><rect x="7.2" y="13.6" width="5.8" height="2.5" rx="0.5"/><rect x="14" y="13.6" width="1.8" height="2.5" rx="0.5"/></g></svg>
<svg style="left:248px;top:401px" width="17" height="17" viewBox="0 0 17 17"><g fill="#3a3a3a" stroke="#3a3a3a" stroke-linecap="round"><circle cx="8.3" cy="2" r="1.6" stroke="none"/>
<path d="M6.8,5.2 L4.3,10.5" stroke-width="3" fill="none"/><path d="M4.3,10.5 L1.8,15.6 M4.3,10.5 L6.6,15.6" stroke-width="1.5" fill="none"/>
<path d="M2.5,6.3 L9.8,11.2" stroke-width="1.1" fill="none"/>
<path d="M9.1,15.6 L12.4,11.4 L16,15.6 Z" stroke="none"/></g></svg>
<div class="t" style="left:278.00px;top:343.00px;font-size:10.8px;color:#111;transform:scaleX(1.0570);transform-origin:0 0;">Ass2 - Latte Intérieure Horizontale Mur</div>
<div class="t" style="left:278.00px;top:363.00px;font-size:10.8px;color:#111;transform:scaleX(1.0128);transform-origin:0 0;">Épinette Rég   1&quot; x  3&quot; x 12&#x27; Latte</div>
<div class="t" style="left:278.00px;top:383.00px;font-size:10.8px;color:#111;transform:scaleX(1.0212);transform-origin:0 0;">Clous Charpente Vrillé Bobine 2-1/4&quot; 0.099 (1000)</div>
<div class="t" style="left:278.00px;top:403.00px;font-size:10.8px;color:#111;transform:scaleX(1.0340);transform-origin:0 0;">MO - Pose Latte Murale H &amp; V (pi)</div>
<div class="t" style="left:278.00px;top:423.00px;font-size:10.8px;color:#111;transform:scaleX(1.0477);transform-origin:0 0;">Ass3 - Latte Bas de Mur Intérieur</div>
<svg style="left:597px;top:381px" width="13" height="15" viewBox="0 0 13 15"><path d="M3.5,0 H9.5 V7 H13 L6.5,14 L0,7 H3.5Z" fill="#0f202b"/></svg>
<div class="t" style="left:633.00px;top:363.00px;font-size:10.8px;color:#111;transform:scaleX(0.9922);transform-origin:0 0;">Stand</div>
<div class="t" style="left:633.00px;top:383.00px;font-size:10.8px;color:#333;transform:scaleX(0.9922);transform-origin:0 0;">Stand</div>
<div class="t" style="left:194.00px;top:423.00px;font-size:10.8px;color:#111;transform:scaleX(0.9922);transform-origin:0 0;">Stand</div>
<div class="t" style="left:1096.00px;top:343.00px;font-size:10.8px;color:#111;transform:scaleX(0.9922);transform-origin:0 0;clip-path:inset(0 4px 0 0);">Stand</div>
<div class="t" style="left:1096.00px;top:423.00px;font-size:10.8px;color:#111;transform:scaleX(0.9922);transform-origin:0 0;">Stand</div>
<div class="t" style="left:793.00px;top:403.00px;font-size:10.8px;color:#111;transform:scaleX(1.1105);transform-origin:0 0;clip-path:inset(0 1px 0 0);">Spéci</div>
<div class="t" style="left:844.00px;top:343.00px;font-size:10.8px;color:#111;transform:scaleX(1.0787);transform-origin:0 0;">Lattes Intérieures</div>
<div class="t" style="left:844.00px;top:363.00px;font-size:10.8px;color:#111;transform:scaleX(1.0410);transform-origin:0 0;">Latte</div>
<div class="t" style="left:844.00px;top:383.00px;font-size:10.8px;color:#111;transform:scaleX(1.0412);transform-origin:0 0;">Fixations</div>
<div class="t" style="left:844.00px;top:403.00px;font-size:10.8px;color:#111;transform:scaleX(0.9192);transform-origin:0 0;">MO</div>
<div class="t" style="left:844.00px;top:423.00px;font-size:10.8px;color:#111;transform:scaleX(1.0093);transform-origin:0 0;">Latte Bas de Mur</div>
<svg style="left:1070px;top:341px" width="13" height="15" viewBox="0 0 13 15"><path d="M3.5,0 H9.5 V7 H13 L6.5,14 L0,7 H3.5Z" fill="#0f202b"/>
<path d="M5.8,1.5 h1.4 v1.8 h1.8 v1.4 h-1.8 v1.8 h-1.4 v-1.8 h-1.8 v-1.4 h1.8z" fill="#fff"/></svg>
<svg style="left:1070px;top:421px" width="13" height="15" viewBox="0 0 13 15"><path d="M3.5,0 H9.5 V7 H13 L6.5,14 L0,7 H3.5Z" fill="#0f202b"/>
<path d="M5.8,1.5 h1.4 v1.8 h1.8 v1.4 h-1.8 v1.8 h-1.4 v-1.8 h-1.8 v-1.4 h1.8z" fill="#fff"/></svg>
<div style="left:31px;top:849px;width:1987px;height:264px;background:#fff;"></div>
<div style="left:34px;top:855px;width:1984px;height:17px;border:1px solid #5a5a5a;border-right:none;"></div>
<div class="t" style="left:35.50px;top:857.50px;font-size:10.8px;color:#333;transform:scaleX(1.0896);transform-origin:0 0;">Descriptions /Notes</div>
<div class="t" style="left:35.00px;top:881.50px;font-size:10.8px;color:#333;transform:scaleX(1.1101);transform-origin:0 0;">Type</div>
<div class="t" style="left:35.00px;top:902.60px;font-size:10.8px;color:#333;">Code Class.</div>
<div class="t" style="left:35.00px;top:928.40px;font-size:10.8px;color:#333;transform:scaleX(1.0460);transform-origin:0 0;">Code</div>
<div class="t" style="left:35.00px;top:953.00px;font-size:10.8px;color:#333;transform:scaleX(0.9212);transform-origin:0 0;">Nom</div>
<div class="t" style="left:35.00px;top:992.60px;font-size:10.8px;color:#333;transform:scaleX(1.0454);transform-origin:0 0;">Spécification</div>
<div class="t" style="left:35.00px;top:1017.50px;font-size:10.8px;color:#333;transform:scaleX(1.1052);transform-origin:0 0;">Identification</div>
<div class="t" style="left:35.00px;top:1044.50px;font-size:10.8px;color:#333;transform:scaleX(1.0397);transform-origin:0 0;">Créateur item</div>
<div class="t" style="left:35.00px;top:1070.00px;font-size:10.8px;color:#333;transform:scaleX(1.0277);transform-origin:0 0;">Statut</div>
<div class="t" style="left:35.00px;top:1095.00px;font-size:10.8px;color:#333;transform:scaleX(1.0348);transform-origin:0 0;">Classement</div>
<div style="left:123px;top:877px;width:102px;height:19px;background:#f0f0f0;border:1px solid #a8a8a8;"></div>
<div class="t" style="left:125.00px;top:880.50px;font-size:10.8px;color:#111;transform:scaleX(0.9894);transform-origin:0 0;">Matériel</div>
<div style="left:296px;top:874px;width:111px;height:22px;background:#f0f0f0;border:1px solid #c3c3c3;"></div>
<div class="t" style="left:314.00px;top:880.00px;font-size:10.8px;color:#111;transform:scaleX(1.0589);transform-origin:0 0;">Item catalogue</div>
<div style="left:122px;top:901px;width:285px;height:19px;background:#fff;border:1px solid #a8a8a8;"></div>
<div class="t" style="left:124.00px;top:904.50px;font-size:10.8px;color:#111;transform:scaleX(0.9041);transform-origin:0 0;">06M</div>
<div style="left:122px;top:926px;width:285px;height:19px;background:#f0f0f0;border:1px solid #a8a8a8;"></div>
<div class="t" style="left:124.00px;top:929.50px;font-size:10.8px;color:#111;transform:scaleX(0.9463);transform-origin:0 0;">CBEST-103799</div>
<div style="left:121px;top:952px;width:268px;height:32px;background:#fff;border:1px solid #a8a8a8;"></div>
<div class="t" style="left:122.00px;top:956.00px;font-size:10.8px;color:#111;transform:scaleX(1.0191);transform-origin:0 0;">Épinette Rég   1&quot; x  3&quot; x 12&#x27; Latte</div>
<div style="left:121px;top:991px;width:223px;height:19px;background:#fff;border:1px solid #a8a8a8;"></div>
<div style="left:350px;top:990px;width:20px;height:20px;background:#f0f0f0;border:1px solid #b9b9b9;"></div>
<div class="t" style="left:355.62px;top:995.00px;font-size:10.5px;color:#111;">...</div>
<div style="left:372px;top:990px;width:20px;height:20px;background:#f0f0f0;border:1px solid #b9b9b9;"></div>
<div class="t" style="left:378.49px;top:995.50px;font-size:10.5px;color:#111;">X</div>
<div style="left:121px;top:1016px;width:205px;height:19px;background:#fff;border:1px solid #a8a8a8;"></div>
<div class="t" style="left:123.00px;top:1019.50px;font-size:10.8px;color:#111;transform:scaleX(1.0410);transform-origin:0 0;">Latte</div>
<div style="left:121px;top:1041px;width:144px;height:19px;background:#f0f0f0;border:1px solid #a8a8a8;"></div>
<div class="t" style="left:123.00px;top:1044.50px;font-size:10.8px;color:#111;transform:scaleX(0.9912);transform-origin:0 0;">Administrateur</div>
<div class="t" style="left:273.00px;top:1043.00px;font-size:10.8px;color:#333;transform:scaleX(1.0266);transform-origin:0 0;">Assemblage</div>
<div style="left:354px;top:1039px;width:56px;height:19px;background:#f0f0f0;border:1px solid #a8a8a8;border-right:none;overflow:hidden;"></div>
<div class="t" style="left:355.50px;top:1042.50px;font-size:10.8px;color:#111;transform:scaleX(0.9627);transform-origin:0 0;">Administrat</div>
<div style="left:121px;top:1067px;width:144px;height:19px;background:#f0f0f0;border:1px solid #a8a8a8;"></div>
<div class="t" style="left:123.00px;top:1070.50px;font-size:10.8px;color:#111;transform:scaleX(0.9359);transform-origin:0 0;">En révision</div>
<div style="left:121px;top:1091px;width:249px;height:23px;background:#fff;border:1px solid #a8a8a8;border-bottom:none;"></div>
<div style="left:370px;top:1091px;width:20px;height:23px;background:#f0f0f0;border:1px solid #b9b9b9;border-bottom:none;"></div>
<div class="t" style="left:375.62px;top:1096.00px;font-size:10.5px;color:#111;">...</div>
<div style="left:406px;top:874px;width:4px;height:239px;background:#a7bcd6;"></div>
<div class="t" style="left:423.00px;top:881.50px;font-size:10.8px;color:#333;transform:scaleX(1.0608);transform-origin:0 0;">Description</div>
<div style="left:486px;top:876px;width:1px;height:22px;background:#111;"></div>
<div class="t" style="left:495.40px;top:881.50px;font-size:10.8px;color:#222;transform:scaleX(1.0607);transform-origin:0 0;">Note interne</div>
<div style="left:565px;top:878px;width:1px;height:20px;background:#555;"></div>
<div class="t" style="left:574.40px;top:881.50px;font-size:10.8px;color:#222;transform:scaleX(1.0443);transform-origin:0 0;">Images / Fichiers attachés</div>
<div style="left:713px;top:878px;width:1px;height:20px;background:#555;"></div>
<div style="left:575px;top:899px;width:1px;height:215px;background:#e6e6e6;"></div>
<div style="left:580px;top:915px;width:340px;height:199px;border-left:1px solid #a0a0a0;border-top:1px solid #a0a0a0;"></div>
<div style="left:427px;top:920px;width:12px;height:12px;background:#fff;border:1px solid #8f8f8f;border-right-color:#d8d8d8;border-bottom-color:#d8d8d8;"></div>
<div class="t" style="left:445.00px;top:921.00px;font-size:10.8px;color:#333;transform:scaleX(1.0708);transform-origin:0 0;">Afficher</div>
<div style="left:419px;top:961px;width:149px;height:93px;border:1px solid #b5b5b5;"></div>
<div style="left:427px;top:955px;width:60px;height:12px;background:#fff;"></div>
<div class="t" style="left:429.00px;top:957.00px;font-size:10.8px;color:#333;transform:scaleX(1.0553);transform-origin:0 0;">Description</div>
<svg style="left:426px;top:983px" width="13" height="13" viewBox="0 0 13 13"><circle cx="6.3" cy="6.3" r="5.6" fill="#fff" stroke="#8f8f8f" stroke-width="1"/><circle cx="6.3" cy="6.3" r="2.2" fill="#111"/></svg>
<div class="t" style="left:444.00px;top:984.50px;font-size:10.8px;color:#333;transform:scaleX(1.0562);transform-origin:0 0;">Catalogue</div>
<svg style="left:426px;top:1015px" width="13" height="13" viewBox="0 0 13 13"><circle cx="6.3" cy="6.3" r="5.6" fill="#fff" stroke="#8f8f8f" stroke-width="1"/></svg>
<div class="t" style="left:444.00px;top:1017.00px;font-size:10.8px;color:#333;transform:scaleX(1.0836);transform-origin:0 0;">Cet endroit (ligne)</div>
<div style="left:911px;top:477px;width:1102px;height:634px;background:#fff;border:1px solid #0078d7;border-top:none;"></div>
<div style="left:911px;top:477px;width:1102px;height:43px;background:#232a35;"></div>
<div style="left:914px;top:490px;width:15px;height:15px;background:#13202c;"></div>
<svg style="left:915px;top:494px" width="13" height="7" viewBox="0 0 13 7"><g fill="none" stroke="#f0c400" stroke-width="1.6"><path d="M3.5,0.8 L6,3.5 L3.5,6.2 L1,3.5Z"/><path d="M9,0.8 L11.5,3.5 L9,6.2 L6.5,3.5Z"/></g></svg>
<div class="t" style="left:934.00px;top:492.00px;font-size:14px;color:#fff;transform:scaleX(0.9418);transform-origin:0 0;">Gestion des équivalences</div>
<div style="left:1888px;top:499px;width:10px;height:1px;background:#a6a6a6;"></div>
<div style="left:1936px;top:493px;width:10px;height:10px;border:1px solid #a6a6a6;"></div>
<svg style="left:1984px;top:493px" width="11" height="11" viewBox="0 0 11 11"><path d="M0.5,0.5 L10.5,10.5 M10.5,0.5 L0.5,10.5" stroke="#a6a6a6" stroke-width="1"/></svg>
<div class="t" style="left:922.50px;top:531.00px;font-size:10.8px;color:#333;transform:scaleX(1.0460);transform-origin:0 0;">Code</div>
<div style="left:960px;top:529px;width:190px;height:16px;border-top:1px solid #a0a0a0;border-left:1px solid #a0a0a0;"></div>
<div class="t" style="left:964.00px;top:532.00px;font-size:10.8px;color:#222;">103799</div>
<div class="t" style="left:1170.00px;top:531.00px;font-size:10.8px;color:#333;transform:scaleX(0.9650);transform-origin:0 0;">Nom</div>
<div style="left:1208px;top:529px;width:527px;height:16px;border-top:1px solid #a0a0a0;border-left:1px solid #a0a0a0;"></div>
<div class="t" style="left:1211.00px;top:532.00px;font-size:10.8px;color:#222;transform:scaleX(1.0128);transform-origin:0 0;">Épinette Rég   1&quot; x  3&quot; x 12&#x27; Latte</div>
<div style="left:923px;top:563px;width:79px;height:25px;border-top:1px solid #e3e3e3;border-left:1px solid #e3e3e3;"></div>
<div style="left:1001px;top:563px;width:2px;height:25px;background:#9a9a9a;"></div>
<div style="left:931px;top:566px;width:64px;height:16px;border:1px dotted #222;"></div>
<div class="t" style="left:932.00px;top:569.50px;font-size:10.8px;color:#333;transform:scaleX(1.0369);transform-origin:0 0;">Équivalence</div>
<div style="left:1003px;top:565px;width:123px;height:22px;border-top:1px solid #e3e3e3;border-right:2px solid #a8a8a8;"></div>
<div class="t" style="left:1009.50px;top:571.00px;font-size:10.8px;color:#6a6a6a;transform:scaleX(1.0387);transform-origin:0 0;">Options d&#x27;équivalence</div>
<div style="left:921px;top:586px;width:1083px;height:476px;border-top:1px solid #e3e3e3;border-left:1px solid #e3e3e3;border-right:2px solid #8f8f8f;border-bottom:2px solid #8f8f8f;"></div>
<div style="left:1002px;top:586px;width:125px;height:2px;background:#fff;"></div>
<div style="left:930px;top:602px;width:1069px;height:418px;border:1px solid #c9c9c9;border-right-color:#a0a0a0;border-bottom-color:#a0a0a0;"></div>
<div style="left:938px;top:596px;width:119px;height:12px;background:#fff;"></div>
<div class="t" style="left:939.00px;top:598.00px;font-size:10.8px;color:#333;transform:scaleX(0.9804);transform-origin:0 0;">Liste d&#x27;items équivalents</div>
<div style="left:939px;top:612px;width:1052px;height:36px;border-top:2px solid #8a8a8a;border-left:1px solid #8a8a8a;border-right:1px solid #e6e6e6;"></div>
<svg style="left:950px;top:621px" width="20" height="19" viewBox="0 0 20 19"><path d="M7.8,0 h4.4 v7.3 h7.8 v4.4 h-7.8 v7.3 h-4.4 v-7.3 h-7.8 v-4.4 h7.8z" fill="#0f202b"/></svg>
<svg style="left:990px;top:620px" width="20" height="20" viewBox="0 0 20 20"><path d="M0.3,3.3 C0.3,1 19.7,1 19.7,3.3 L13,11.8 V19 H8.2 V11.8 Z" fill="#0f202b"/>
<ellipse cx="10" cy="3.3" rx="8.3" ry="1.6" fill="#fff"/>
<path d="M8.4,7.6 L11.8,11 M11.8,7.6 L8.4,11" stroke="#fff" stroke-width="1.1"/></svg>
<svg style="left:1022px;top:626px" width="20" height="9" viewBox="0 0 20 9"><rect x="6.5" y="0" width="13.5" height="3" fill="#0f202b"/><rect x="0" y="5" width="13.5" height="3.2" fill="#0f202b"/></svg>
<svg style="left:1056px;top:623px" width="17" height="14" viewBox="0 0 17 14"><path d="M0.8,0 V13 H16" fill="none" stroke="#0f202b" stroke-width="1.4"/><g fill="#0f202b"><rect x="3.5" y="7" width="1.6" height="5"/><rect x="6.8" y="4" width="1.6" height="8"/><rect x="10" y="6" width="1.6" height="6"/><rect x="13.2" y="2" width="1.6" height="10"/></g></svg>
<svg style="left:1086px;top:621px" width="21" height="18" viewBox="0 0 21 18"><g fill="#0f202b"><rect x="5" y="0" width="10" height="3"/><rect x="0" y="4.5" width="20" height="9" rx="2"/>
<rect x="4.5" y="9" width="11" height="9"/></g>
<rect x="6.5" y="11" width="7" height="6" fill="#fff"/><circle cx="2.5" cy="7" r="0.9" fill="#fff"/></svg>
<div style="left:938px;top:648px;width:1054px;height:367px;background:#ababab;border:1px solid #6e6e6e;border-top:none;"></div>
<div style="left:938px;top:648px;width:469px;height:21px;background:#232a35;"></div>
<div style="left:958px;top:649px;width:1px;height:20px;background:#b8bcc2;"></div>
<div style="left:1006px;top:649px;width:1px;height:20px;background:#b8bcc2;"></div>
<div style="left:1075px;top:649px;width:1px;height:20px;background:#b8bcc2;"></div>
<div class="t" style="left:968.50px;top:653.50px;font-size:11.5px;color:#fff;font-weight:bold;transform:scaleX(0.9391);transform-origin:0 0;">Code</div>
<div class="t" style="left:1008.50px;top:653.50px;font-size:11.5px;color:#fff;font-weight:bold;transform:scaleX(0.9874);transform-origin:0 0;">Code Class.</div>
<div class="t" style="left:1228.00px;top:653.50px;font-size:11.5px;color:#fff;font-weight:bold;transform:scaleX(1.0171);transform-origin:0 0;">Nom</div>
<div style="left:939px;top:669px;width:19px;height:345px;background:#efefef;"></div>
<div style="left:958px;top:669px;width:449px;height:20px;background:#e0f4f2;"></div>
<div style="left:958px;top:689px;width:449px;height:325px;background:#fff;"></div>
<div style="left:958px;top:689px;width:449px;height:19px;background:#0076d6;"></div>
<div style="left:939px;top:688px;width:19px;height:1px;background:#8f8f8f;"></div>
<div style="left:939px;top:708px;width:19px;height:1px;background:#8f8f8f;"></div>
<div style="left:958px;top:708px;width:449px;height:1px;background:#ececec;"></div>
<div style="left:939px;top:728px;width:19px;height:1px;background:#8f8f8f;"></div>
<div style="left:958px;top:728px;width:449px;height:1px;background:#ececec;"></div>
<div style="left:939px;top:748px;width:19px;height:1px;background:#8f8f8f;"></div>
<div style="left:958px;top:748px;width:449px;height:1px;background:#ececec;"></div>
<div style="left:939px;top:768px;width:19px;height:1px;background:#8f8f8f;"></div>
<div style="left:958px;top:768px;width:449px;height:1px;background:#ececec;"></div>
<div style="left:939px;top:788px;width:19px;height:1px;background:#8f8f8f;"></div>
<div style="left:958px;top:788px;width:449px;height:1px;background:#ececec;"></div>
<div style="left:939px;top:808px;width:19px;height:1px;background:#8f8f8f;"></div>
<div style="left:958px;top:808px;width:449px;height:1px;background:#ececec;"></div>
<div style="left:939px;top:828px;width:19px;height:1px;background:#8f8f8f;"></div>
<div style="left:958px;top:828px;width:449px;height:1px;background:#ececec;"></div>
<div style="left:939px;top:848px;width:19px;height:1px;background:#8f8f8f;"></div>
<div style="left:958px;top:848px;width:449px;height:1px;background:#ececec;"></div>
<div style="left:939px;top:868px;width:19px;height:1px;background:#8f8f8f;"></div>
<div style="left:958px;top:868px;width:449px;height:1px;background:#ececec;"></div>
<div style="left:939px;top:888px;width:19px;height:1px;background:#8f8f8f;"></div>
<div style="left:958px;top:888px;width:449px;height:1px;background:#ececec;"></div>
<div style="left:939px;top:908px;width:19px;height:1px;background:#8f8f8f;"></div>
<div style="left:958px;top:908px;width:449px;height:1px;background:#ececec;"></div>
<div style="left:939px;top:928px;width:19px;height:1px;background:#8f8f8f;"></div>
<div style="left:958px;top:928px;width:449px;height:1px;background:#ececec;"></div>
<div style="left:939px;top:948px;width:19px;height:1px;background:#8f8f8f;"></div>
<div style="left:958px;top:948px;width:449px;height:1px;background:#ececec;"></div>
<div style="left:939px;top:968px;width:19px;height:1px;background:#8f8f8f;"></div>
<div style="left:958px;top:968px;width:449px;height:1px;background:#ececec;"></div>
<div style="left:939px;top:988px;width:19px;height:1px;background:#8f8f8f;"></div>
<div style="left:958px;top:988px;width:449px;height:1px;background:#ececec;"></div>
<div style="left:939px;top:1008px;width:19px;height:1px;background:#8f8f8f;"></div>
<div style="left:958px;top:1008px;width:449px;height:1px;background:#ececec;"></div>
<div style="left:1006px;top:708px;width:1px;height:306px;background:#ececec;"></div>
<div style="left:1075px;top:708px;width:1px;height:306px;background:#ececec;"></div>
<div style="left:1006px;top:689px;width:1px;height:19px;background:#ffffff;"></div>
<div style="left:1075px;top:689px;width:1px;height:19px;background:#ffffff;"></div>
<div style="left:958px;top:669px;width:1px;height:345px;background:#8f8f8f;"></div>
<div class="t" style="left:962.60px;top:693.00px;font-size:10.8px;color:#fff;transform:scaleX(0.9714);transform-origin:0 0;">102186</div>
<div class="t" style="left:1010.40px;top:693.00px;font-size:10.8px;color:#fff;transform:scaleX(0.9517);transform-origin:0 0;">06M</div>
<div class="t" style="left:1079.00px;top:693.00px;font-size:10.8px;color:#fff;transform:scaleX(1.0155);transform-origin:0 0;">Épinette Rég   2&quot; x  4&quot; x 12&#x27;</div>
<div class="t" style="left:962.60px;top:713.00px;font-size:10.8px;color:#111;transform:scaleX(0.9714);transform-origin:0 0;">102187</div>
<div class="t" style="left:1010.40px;top:713.00px;font-size:10.8px;color:#111;transform:scaleX(0.9517);transform-origin:0 0;">06M</div>
<div class="t" style="left:1079.00px;top:713.00px;font-size:10.8px;color:#111;">Épinette Sec  2&quot; x  6&quot; x 12&#x27;</div>
<div class="t" style="left:962.60px;top:733.00px;font-size:10.8px;color:#111;transform:scaleX(0.9714);transform-origin:0 0;">102191</div>
<div class="t" style="left:1010.40px;top:733.00px;font-size:10.8px;color:#111;transform:scaleX(0.9517);transform-origin:0 0;">06M</div>
<div class="t" style="left:1079.00px;top:733.00px;font-size:10.8px;color:#111;transform:scaleX(1.0235);transform-origin:0 0;">Épinette Rég   1&quot; x  4&quot; x 12&#x27; Latte</div>
<div class="t" style="left:962.60px;top:753.00px;font-size:10.8px;color:#111;transform:scaleX(0.9714);transform-origin:0 0;">102193</div>
<div class="t" style="left:1010.40px;top:753.00px;font-size:10.8px;color:#111;transform:scaleX(0.9517);transform-origin:0 0;">06M</div>
<div class="t" style="left:1079.00px;top:753.00px;font-size:10.8px;color:#111;transform:scaleX(1.0268);transform-origin:0 0;">Épinette Rég   1&quot; x  3&quot; x 12&#x27; Latte Brute</div>
<div class="t" style="left:962.60px;top:773.00px;font-size:10.8px;color:#111;transform:scaleX(0.9714);transform-origin:0 0;">102225</div>
<div class="t" style="left:1010.40px;top:773.00px;font-size:10.8px;color:#111;transform:scaleX(0.9517);transform-origin:0 0;">06M</div>
<div class="t" style="left:1079.00px;top:773.00px;font-size:10.8px;color:#111;transform:scaleX(1.0173);transform-origin:0 0;">Épinette Rég 12&quot; x 12&quot; x 16&#x27;</div>
<div class="t" style="left:962.60px;top:793.00px;font-size:10.8px;color:#111;transform:scaleX(0.9714);transform-origin:0 0;">102226</div>
<div class="t" style="left:1010.40px;top:793.00px;font-size:10.8px;color:#111;transform:scaleX(0.9517);transform-origin:0 0;">06M</div>
<div class="t" style="left:1079.00px;top:793.00px;font-size:10.8px;color:#111;">Épinette Sec  2&quot; x 12&quot; x 12&#x27;</div>
<div class="t" style="left:962.60px;top:813.00px;font-size:10.8px;color:#111;transform:scaleX(0.9714);transform-origin:0 0;">102228</div>
<div class="t" style="left:1010.40px;top:813.00px;font-size:10.8px;color:#111;transform:scaleX(0.9517);transform-origin:0 0;">06M</div>
<div class="t" style="left:1079.00px;top:813.00px;font-size:10.8px;color:#111;transform:scaleX(1.0163);transform-origin:0 0;">Épinette Rég  2&quot; x  4&quot; x  8&#x27;</div>
<div class="t" style="left:962.60px;top:833.00px;font-size:10.8px;color:#111;transform:scaleX(0.9714);transform-origin:0 0;">102257</div>
<div class="t" style="left:1010.40px;top:833.00px;font-size:10.8px;color:#111;transform:scaleX(0.9517);transform-origin:0 0;">06M</div>
<div class="t" style="left:1079.00px;top:833.00px;font-size:10.8px;color:#111;transform:scaleX(1.0131);transform-origin:0 0;">Épinette [Type?] ?&quot; x ?&quot; x ?&#x27;</div>
<div class="t" style="left:962.60px;top:853.00px;font-size:10.8px;color:#111;transform:scaleX(0.9714);transform-origin:0 0;">102263</div>
<div class="t" style="left:1010.40px;top:853.00px;font-size:10.8px;color:#111;transform:scaleX(0.9517);transform-origin:0 0;">06M</div>
<div class="t" style="left:1079.00px;top:853.00px;font-size:10.8px;color:#111;transform:scaleX(1.0075);transform-origin:0 0;">Épinette Sec  2&quot; x  6&quot; x  8&#x27;</div>
<div class="t" style="left:962.60px;top:873.00px;font-size:10.8px;color:#111;transform:scaleX(0.9714);transform-origin:0 0;">102280</div>
<div class="t" style="left:1010.40px;top:873.00px;font-size:10.8px;color:#111;transform:scaleX(0.9517);transform-origin:0 0;">06M</div>
<div class="t" style="left:1079.00px;top:873.00px;font-size:10.8px;color:#111;">Poutre 2.0E Parallam PSL 5-1/4&quot; x 16&quot; x 1&#x27;</div>
<div class="t" style="left:962.60px;top:893.00px;font-size:10.8px;color:#111;transform:scaleX(0.9714);transform-origin:0 0;">102281</div>
<div class="t" style="left:1010.40px;top:893.00px;font-size:10.8px;color:#111;transform:scaleX(0.9517);transform-origin:0 0;">06M</div>
<div class="t" style="left:1079.00px;top:893.00px;font-size:10.8px;color:#111;transform:scaleX(1.0071);transform-origin:0 0;">Poutre [Type]_?-?/?&quot; x ??&quot; x 1&#x27;</div>
<div class="t" style="left:962.60px;top:913.00px;font-size:10.8px;color:#111;transform:scaleX(0.9714);transform-origin:0 0;">103065</div>
<div class="t" style="left:1010.40px;top:913.00px;font-size:10.8px;color:#111;transform:scaleX(0.9517);transform-origin:0 0;">06M</div>
<div class="t" style="left:1079.00px;top:913.00px;font-size:10.8px;color:#111;">Épinette Sec  2&quot; x 10&quot; x 12&#x27;</div>
<div class="t" style="left:962.60px;top:933.00px;font-size:10.8px;color:#111;transform:scaleX(0.9714);transform-origin:0 0;">103121</div>
<div class="t" style="left:1010.40px;top:933.00px;font-size:10.8px;color:#111;transform:scaleX(0.9517);transform-origin:0 0;">06M</div>
<div class="t" style="left:1079.00px;top:933.00px;font-size:10.8px;color:#111;transform:scaleX(1.0075);transform-origin:0 0;">Épinette Sec  2&quot; x  8&quot; x  8&#x27;</div>
<div class="t" style="left:962.60px;top:953.00px;font-size:10.8px;color:#111;transform:scaleX(0.9714);transform-origin:0 0;">103122</div>
<div class="t" style="left:1010.40px;top:953.00px;font-size:10.8px;color:#111;transform:scaleX(0.9517);transform-origin:0 0;">06M</div>
<div class="t" style="left:1079.00px;top:953.00px;font-size:10.8px;color:#111;transform:scaleX(1.0075);transform-origin:0 0;">Épinette Sec  2&quot; x  4&quot; x  8&#x27;</div>
<div class="t" style="left:962.60px;top:973.00px;font-size:10.8px;color:#111;transform:scaleX(0.9714);transform-origin:0 0;">103123</div>
<div class="t" style="left:1010.40px;top:973.00px;font-size:10.8px;color:#111;transform:scaleX(0.9517);transform-origin:0 0;">06M</div>
<div class="t" style="left:1079.00px;top:973.00px;font-size:10.8px;color:#111;">Épinette Sec   2&quot; x  4&quot; x 12&#x27;</div>
<div class="t" style="left:962.60px;top:993.00px;font-size:10.8px;color:#111;transform:scaleX(0.9714);transform-origin:0 0;">103124</div>
<div class="t" style="left:1010.40px;top:993.00px;font-size:10.8px;color:#111;transform:scaleX(0.9517);transform-origin:0 0;">06M</div>
<div class="t" style="left:1079.00px;top:993.00px;font-size:10.8px;color:#111;transform:scaleX(1.0075);transform-origin:0 0;">Épinette Sec  2&quot; x  3&quot; x  8&#x27;</div>
<div style="left:1974px;top:649px;width:17px;height:365px;background:#f0f0f0;"></div>
<div style="left:1975px;top:666px;width:15px;height:89px;background:#cdcdcd;"></div>
<svg style="left:1978px;top:653px" width="10" height="7" viewBox="0 0 10 7"><path d="M1,5.5 L5,1.5 L9,5.5" fill="none" stroke="#333" stroke-width="1.6"/></svg>
<svg style="left:1978px;top:1002px" width="10" height="7" viewBox="0 0 10 7"><path d="M1,1.5 L5,5.5 L9,1.5" fill="none" stroke="#333" stroke-width="1.6"/></svg>
<div style="left:938px;top:1029px;width:96px;height:23px;border-right:2px solid #111;border-bottom:2px solid #111;"></div>
<div class="t" style="left:955.20px;top:1035.00px;font-size:10.8px;color:#333;transform:scaleX(1.0261);transform-origin:0 0;">Sélectionner</div>
<div style="left:1916px;top:1078px;width:75px;height:26px;border-right:2px solid #111;border-bottom:2px solid #111;"></div>
<div class="t" style="left:1930.00px;top:1086.00px;font-size:10.8px;color:#333;transform:scaleX(1.0476);transform-origin:0 0;">Terminer</div>
<svg style="left:2003px;top:1102px" width="8" height="8" viewBox="0 0 8 8"><g fill="#777"><rect x="5" y="0" width="2" height="2"/><rect x="2.5" y="2.5" width="2" height="2"/><rect x="5" y="2.5" width="2" height="2"/><rect x="0" y="5" width="2" height="2"/><rect x="2.5" y="5" width="2" height="2"/><rect x="5" y="5" width="2" height="2"/></g></svg>
<svg style="left:0;top:0;z-index:9;" width="2027" height="1122" viewBox="0 0 2027 1122"><defs><filter id="sh" x="-20%" y="-20%" width="140%" height="150%"><feGaussianBlur in="SourceAlpha" stdDeviation="1.6"/><feOffset dx="2" dy="2.5"/><feComponentTransfer><feFuncA type="linear" slope="0.45"/></feComponentTransfer><feMerge><feMergeNode/><feMergeNode in="SourceGraphic"/></feMerge></filter></defs>
<g fill="none" stroke="#8b0a0a" stroke-width="3" filter="url(#sh)">
<ellipse cx="470.6" cy="270.6" rx="46" ry="15.8"/>
<ellipse cx="665" cy="367.5" rx="43" ry="16.3"/>
<ellipse cx="1069.2" cy="574.9" rx="65.5" ry="20"/>
<ellipse cx="961" cy="630.5" rx="22.5" ry="22"/>
</g>
<g filter="url(#sh)"><path d="M702,379 L900.5,479.3" stroke="#8b0a0a" stroke-width="2"/>
<path d="M910,484.6 L898.3,482.8 L901.6,475.8 Z" fill="#8b0a0a"/></g></svg>
<svg style="left:0;top:0;z-index:10;" width="2027" height="1122" viewBox="0 0 2027 1122"><circle cx="418.5" cy="249.2" r="14.5" fill="#8b0a0a"/></svg>
<div class="t" style="left:413.49px;top:240.70px;font-size:18px;color:#fff;z-index:11;">1</div>
<svg style="left:0;top:0;z-index:10;" width="2027" height="1122" viewBox="0 0 2027 1122"><circle cx="614.5" cy="349.3" r="14.5" fill="#8b0a0a"/></svg>
<div class="t" style="left:609.49px;top:340.80px;font-size:18px;color:#fff;z-index:11;">2</div>
<svg style="left:0;top:0;z-index:10;" width="2027" height="1122" viewBox="0 0 2027 1122"><circle cx="925.4" cy="599.5" r="14.5" fill="#8b0a0a"/></svg>
<div class="t" style="left:920.39px;top:591.00px;font-size:18px;color:#fff;z-index:11;">3</div>
<svg style="left:0;top:0;z-index:10;" width="2027" height="1122" viewBox="0 0 2027 1122"><circle cx="1005.5" cy="548.4" r="14.5" fill="#8b0a0a"/></svg>
<div class="t" style="left:1000.49px;top:539.90px;font-size:18px;color:#fff;z-index:11;">4</div>
<svg style="left:124px;top:236px" width="14" height="22" viewBox="0 0 14 22"><path d="M0.5,0.5 V18.5 L4.3,14.8 L7,20.8 L9.6,19.8 L7,13.6 H12 Z" fill="#fff" stroke="#111" stroke-width="1.1" stroke-linejoin="round"/></svg>
</body></html>
